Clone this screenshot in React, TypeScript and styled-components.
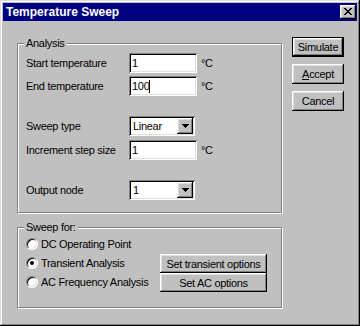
import styled, { createGlobalStyle } from 'styled-components'

const GlobalStyle = createGlobalStyle`
  body {
    margin: 0;
    font-family: 'Liberation Sans', Arial, sans-serif;
    font-size: 11px;
    letter-spacing: -0.3px;
    color: #000;
  }
`

const raised = `
  box-shadow: inset -1px -1px #000, inset 1px 1px #fff, inset -2px -2px #808080, inset 2px 2px #dfdfdf;
`

const sunken = `
  box-shadow: inset 1px 1px #808080, inset -1px -1px #fff, inset 2px 2px #000, inset -2px -2px #dfdfdf;
`

const Window = styled.div`
  width: 360px;
  height: 326px;
  box-sizing: border-box;
  padding: 3px;
  background: #c0c0c0;
  box-shadow: inset -1px -1px #000, inset 1px 1px #dfdfdf, inset -2px -2px #808080, inset 2px 2px #fff;
  display: flex;
  flex-direction: column;
`

const TitleBar = styled.div`
  height: 18px;
  background: #000080;
  display: flex;
  align-items: center;
  justify-content: space-between;
  padding-left: 3px;
`

const Title = styled.span`
  color: #fff;
  font-weight: bold;
  font-size: 12px;
  letter-spacing: 0;
  line-height: 18px;
`

const CloseButton = styled.div`
  width: 16px;
  height: 14px;
  margin-right: 1px;
  background: #c0c0c0;
  ${raised}
  display: flex;
  align-items: center;
  justify-content: center;
  padding-bottom: 1px;
  box-sizing: border-box;
`

const Body = styled.div`
  display: flex;
  align-items: flex-start;
  padding: 16px 0 0 14px;
`

const MainColumn = styled.div`
  width: 265px;
  display: flex;
  flex-direction: column;
`

const GroupBox = styled.fieldset<{ $spaced?: boolean }>`
  margin: ${(p) => (p.$spaced ? '8px' : '0')} 0 0 0;
  border: 1px solid #808080;
  box-shadow: 1px 1px 0 #fff, inset 1px 1px 0 #fff;
  padding: ${(p) => (p.$spaced ? '0 8px 15px' : '3px 8px 12px')};
  min-width: 0;
`

const Caption = styled.legend`
  margin-left: -2px;
  padding: 0 2px;
  line-height: 13px;
  background: #c0c0c0;
`

const FieldRow = styled.div<{ $gap: number }>`
  display: flex;
  align-items: center;
  height: 20px;
  margin-top: ${(p) => p.$gap}px;
`

const FieldLabel = styled.span`
  width: 103px;
  white-space: nowrap;
`

const TextBox = styled.div`
  width: 68px;
  height: 20px;
  box-sizing: border-box;
  background: #fff;
  ${sunken}
  padding: 0 3px;
  display: flex;
  align-items: center;
`

const Caret = styled.span`
  display: inline-block;
  width: 1px;
  height: 13px;
  background: #000;
`

const Unit = styled.span`
  margin-left: 4px;
`

const Select = styled.div`
  width: 66px;
  height: 20px;
  box-sizing: border-box;
  background: #fff;
  ${sunken}
  padding: 2px 2px 2px 4px;
  display: flex;
  align-items: center;
  justify-content: space-between;
`

const DropButton = styled.div`
  width: 16px;
  height: 16px;
  background: #c0c0c0;
  ${raised}
  display: flex;
  align-items: center;
  justify-content: center;
`

const ButtonColumn = styled.div`
  margin-left: 10px;
  display: flex;
  flex-direction: column;
  gap: 7px;
`

const PushButton = styled.div<{ $default?: boolean; $width?: number; $height?: number }>`
  width: ${(p) => p.$width ?? 52}px;
  height: ${(p) => p.$height ?? 20}px;
  box-sizing: border-box;
  background: #c0c0c0;
  border: ${(p) => (p.$default ? '1px solid #000' : 'none')};
  ${raised}
  display: flex;
  align-items: center;
  justify-content: center;
  white-space: nowrap;
`

const SweepGrid = styled.div`
  display: grid;
  grid-template-columns: 134px auto;
`

const RadioList = styled.div`
  display: flex;
  flex-direction: column;
`

const RadioRow = styled.label`
  height: 19px;
  display: flex;
  align-items: center;
  gap: 3px;
  white-space: nowrap;
`

const RadioCircle = styled.span<{ $checked?: boolean }>`
  width: 12px;
  height: 12px;
  box-sizing: border-box;
  border-radius: 50%;
  background: #fff;
  border: 1px solid;
  border-color: #808080 #fff #fff #808080;
  box-shadow: inset 1px 1px #000, inset -1px -1px #dfdfdf;
  display: flex;
  align-items: center;
  justify-content: center;
  &::after {
    content: '';
    width: 4px;
    height: 4px;
    border-radius: 50%;
    background: ${(p) => (p.$checked ? '#000' : 'transparent')};
  }
`

const OptionButtons = styled.div`
  margin-top: 20px;
  display: flex;
  flex-direction: column;
`

const CloseGlyph = () => (
  <svg width="8" height="7" viewBox="0 0 8 7" shapeRendering="crispEdges">
    <path
      fill="#000"
      d="M0 0h2v1H0zM6 0h2v1H6zM1 1h2v1H1zM5 1h2v1H5zM2 2h4v1H2zM3 3h2v1H3zM2 4h4v1H2zM1 5h2v1H1zM5 5h2v1H5zM0 6h2v1H0zM6 6h2v1H6z"
    />
  </svg>
)

const ArrowGlyph = () => (
  <svg width="7" height="4" viewBox="0 0 7 4" shapeRendering="crispEdges">
    <path fill="#000" d="M0 0h7v1H0zM1 1h5v1H1zM2 2h3v1H2zM3 3h1v1H3z" />
  </svg>
)

const DropDown = ({ value }: { value: string }) => (
  <Select>
    <span>{value}</span>
    <DropButton>
      <ArrowGlyph />
    </DropButton>
  </Select>
)

export default function App() {
  return (
    <>
      <GlobalStyle />
      <Window>
        <TitleBar>
          <Title>Temperature Sweep</Title>
          <CloseButton>
            <CloseGlyph />
          </CloseButton>
        </TitleBar>
        <Body>
          <MainColumn>
            <GroupBox>
              <Caption>Analysis</Caption>
              <FieldRow $gap={0}>
                <FieldLabel>Start temperature</FieldLabel>
                <TextBox>1</TextBox>
                <Unit>°C</Unit>
              </FieldRow>
              <FieldRow $gap={3}>
                <FieldLabel>End temperature</FieldLabel>
                <TextBox>
                  100
                  <Caret />
                </TextBox>
                <Unit>°C</Unit>
              </FieldRow>
              <FieldRow $gap={20}>
                <FieldLabel>Sweep type</FieldLabel>
                <DropDown value="Linear" />
              </FieldRow>
              <FieldRow $gap={4}>
                <FieldLabel>Increment step size</FieldLabel>
                <TextBox>1</TextBox>
                <Unit>°C</Unit>
              </FieldRow>
              <FieldRow $gap={20}>
                <FieldLabel>Output node</FieldLabel>
                <DropDown value="1" />
              </FieldRow>
            </GroupBox>
            <GroupBox $spaced>
              <Caption>Sweep for:</Caption>
              <SweepGrid>
                <RadioList>
                  <RadioRow>
                    <RadioCircle />
                    DC Operating Point
                  </RadioRow>
                  <RadioRow>
                    <RadioCircle $checked />
                    Transient Analysis
                  </RadioRow>
                  <RadioRow>
                    <RadioCircle />
                    AC Frequency Analysis
                  </RadioRow>
                </RadioList>
                <OptionButtons>
                  <PushButton $width={107} $height={19}>Set transient options</PushButton>
                  <PushButton $width={107} $height={19}>Set AC options</PushButton>
                </OptionButtons>
              </SweepGrid>
            </GroupBox>
          </MainColumn>
          <ButtonColumn>
            <PushButton $default>Simulate</PushButton>
            <PushButton>
              <span>
                <u>A</u>ccept
              </span>
            </PushButton>
            <PushButton>Cancel</PushButton>
          </ButtonColumn>
        </Body>
      </Window>
    </>
  )
}
